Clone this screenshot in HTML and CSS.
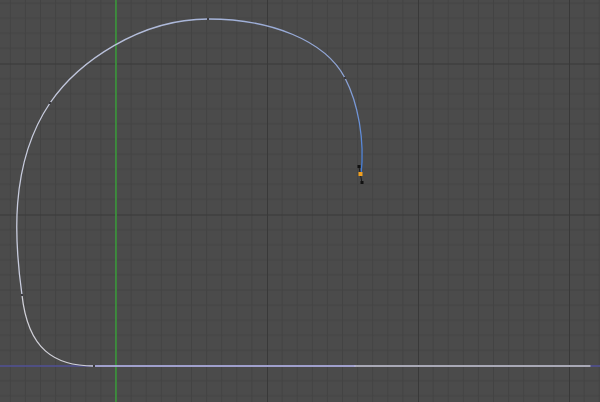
FILE: index.html
```html
<!DOCTYPE html>
<html lang="en">
<head>
    <meta charset="UTF-8">
    <title>Curve edit - side view</title>
    <link rel="stylesheet" href="styles.css">
</head>
<body>
    <div class="viewport">
        <svg class="canvas" width="600" height="402" viewBox="0 0 600 402">
            <defs>
                <pattern id="grid" patternUnits="userSpaceOnUse" x="116" y="365.5" width="151" height="151">
                    <rect width="151" height="151" fill="#4b4b4b"/>
                    <g stroke="#434343" stroke-width="1">
                        <path d="M15.1 0V151M30.2 0V151M45.3 0V151M60.4 0V151M75.5 0V151M90.6 0V151M105.7 0V151M120.8 0V151M135.9 0V151"/>
                        <path d="M0 15.1H151M0 30.2H151M0 45.3H151M0 60.4H151M0 75.5H151M0 90.6H151M0 105.7H151M0 120.8H151M0 135.9H151"/>
                    </g>
                    <path d="M0.5 0V151M0 0.5H151" stroke="#393939" stroke-width="1"/>
                </pattern>
                <linearGradient id="gTop" gradientUnits="userSpaceOnUse" x1="50" y1="103" x2="345" y2="78">
                    <stop offset="0" stop-color="#c4c8dc"/>
                    <stop offset="1" stop-color="#8ea4d6"/>
                </linearGradient>
                <linearGradient id="gEnd" gradientUnits="userSpaceOnUse" x1="345" y1="78" x2="361" y2="175">
                    <stop offset="0" stop-color="#8ea4d6"/>
                    <stop offset="1" stop-color="#3f7ad8"/>
                </linearGradient>
            </defs>

            <rect width="600" height="402" fill="url(#grid)"/>

            <!-- axes -->
            <line class="axis-y" x1="116" y1="0" x2="116" y2="402"/>
            <line class="axis-x" x1="0" y1="366" x2="600" y2="366"/>

            <!-- the curve, drawn piece by piece so the wire colour can shift -->
            <path class="wire wire-flat" d="M590 366H355"/>
            <path class="wire wire-axis" d="M355 366H94"/>
            <path class="wire wire-low" d="M94 366C55 366 28 350 22 295"/>
            <path class="wire wire-side" d="M22 295C15 245 8 165 50 103"/>
            <path class="wire" stroke="url(#gTop)" d="M50 103C78 62 140 19 208 19C270 19 325 40 345 78"/>
            <path class="wire" stroke="url(#gEnd)" d="M345 78C358 103 365 140 361 175"/>

            <!-- segment ticks -->
            <g class="tick">
                <rect x="93" y="365" width="2" height="2"/>
                <rect x="21" y="294" width="2" height="2"/>
                <rect x="49" y="102" width="2" height="2"/>
                <rect x="207" y="18" width="2" height="2"/>
                <rect x="344" y="77" width="2" height="2"/>
            </g>

            <!-- active point with its handles -->
            <line class="handle" x1="359" y1="167" x2="362" y2="183"/>
            <rect class="knob" x="357.5" y="165" width="3" height="3"/>
            <rect class="knob" x="360.5" y="181" width="3" height="3"/>
            <rect class="active" x="358.5" y="172" width="4" height="4"/>
        </svg>
    </div>
</body>
</html>
```

FILE: styles.css
```css
html, body {
    margin: 0;
    padding: 0;
    background: #4b4b4b;
    overflow: hidden;
}
.viewport {
    width: 600px;
    height: 402px;
}
.canvas {
    display: block;
}
.axis-y {
    stroke: #3d9a3d;
    stroke-width: 1.6;
}
.axis-x {
    stroke: #54549a;
    stroke-width: 1.6;
}
.wire {
    fill: none;
    stroke-width: 1.3;
    stroke-linecap: round;
}
.wire-flat {
    stroke: #c8c8c8;
}
.wire-axis {
    stroke: #bcbce6;
}
.wire-low {
    stroke: #d0d0d8;
}
.wire-side {
    stroke: #c8ccde;
}
.tick {
    fill: #3a3a40;
}
.handle {
    stroke: #1c1c1c;
    stroke-width: 1;
}
.knob {
    fill: #111;
}
.active {
    fill: #f0a020;
}
```
